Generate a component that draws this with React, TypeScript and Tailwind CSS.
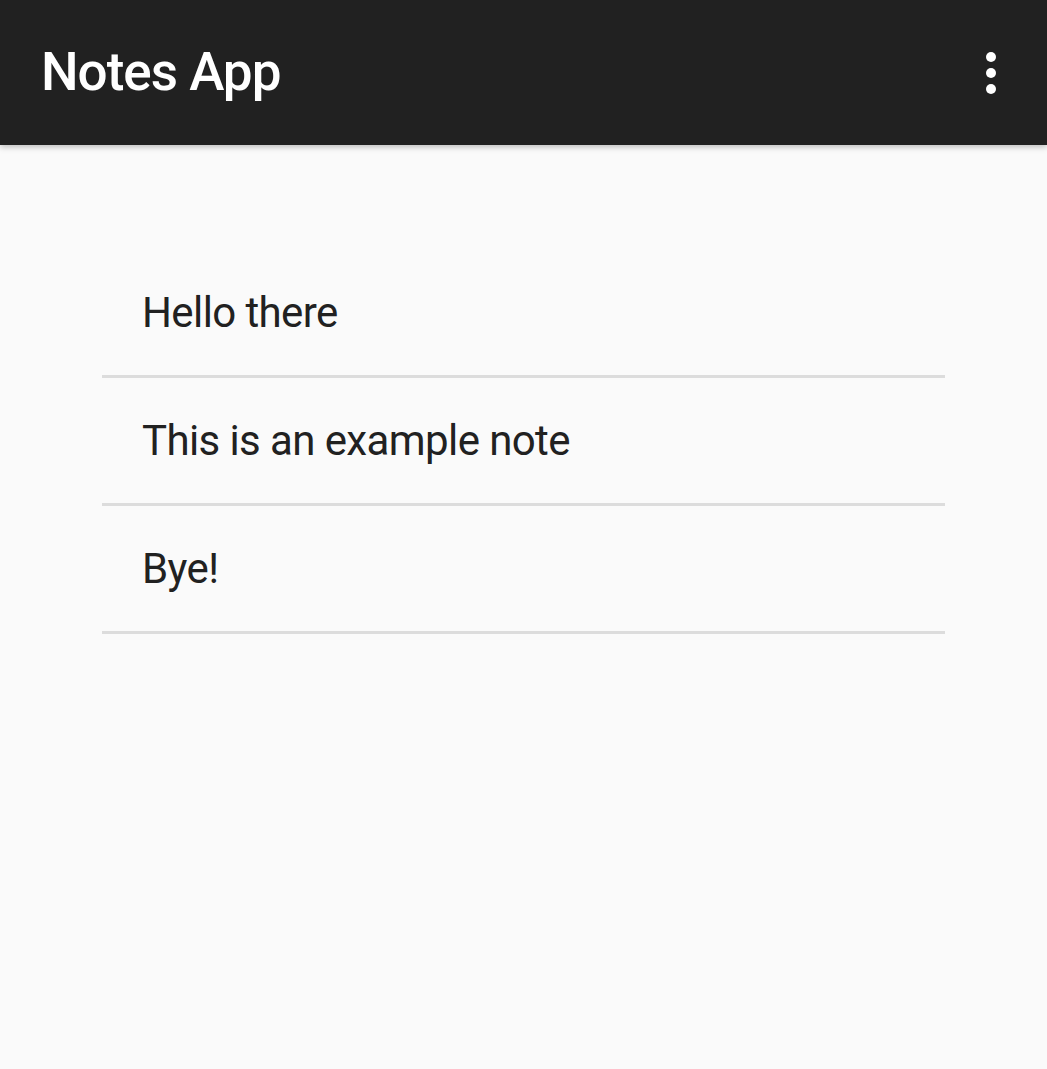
const notes = ['Hello there', 'This is an example note', 'Bye!'];

export default function App() {
  return (
    <div className="min-h-[1069px] bg-[#fafafa] font-['Roboto',sans-serif]">
      {/* Toolbar */}
      <header className="relative z-10 flex h-[145px] items-center justify-between bg-[#212121] pl-[41px] pr-[41px] shadow-[0_2px_6px_rgba(0,0,0,0.25)]">
        <h1 className="text-[53px] font-medium leading-none tracking-[-1px] text-white">Notes App</h1>
        <button className="flex h-[48px] w-[30px] flex-col items-center justify-center gap-[6px]">
          <span className="h-[10px] w-[10px] rounded-full bg-white" />
          <span className="h-[10px] w-[10px] rounded-full bg-white" />
          <span className="h-[10px] w-[10px] rounded-full bg-white" />
        </button>
      </header>

      {/* Notes list */}
      <ul className="mx-[102px] mt-[105px]">
        {notes.map((note) => (
          <li
            key={note}
            className="flex h-[128px] items-center border-b-[3px] border-[#dcdcdc] pl-[40px] text-[42px] tracking-[-0.6px] text-[#212121]"
          >
            {note}
          </li>
        ))}
      </ul>
    </div>
  );
}
